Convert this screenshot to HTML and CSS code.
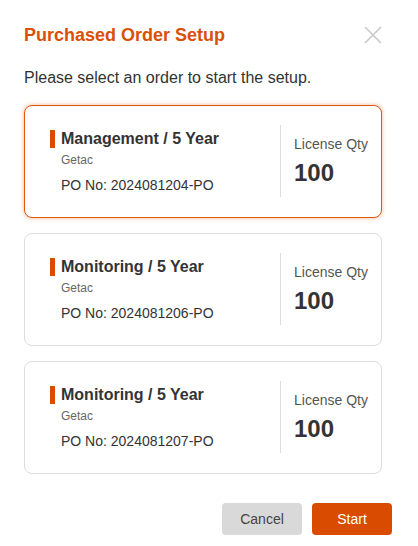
FILE: index.html
```html
<!DOCTYPE html>
<html>
<head>
<meta charset="utf-8">
<link rel="stylesheet" href="styles.css">
</head>
<body>
<div class="dialog">
  <div class="header">
    <h1 class="title">Purchased Order Setup</h1>
    <button class="close" aria-label="Close">
      <svg width="18" height="18" viewBox="0 0 18 18"><path d="M1 1L17 17M17 1L1 17" stroke="#c8c8c8" stroke-width="1.6" fill="none"/></svg>
    </button>
  </div>
  <p class="subtitle">Please select an order to start the setup.</p>
  <div class="orders">
    <div class="card selected">
      <div class="info">
        <div class="name"><span class="bar"></span>Management / 5 Year</div>
        <div class="vendor">Getac</div>
        <div class="po">PO No: 2024081204-PO</div>
      </div>
      <div class="qty">
        <div class="qty-label">License Qty</div>
        <div class="qty-value">100</div>
      </div>
    </div>
    <div class="card">
      <div class="info">
        <div class="name"><span class="bar"></span>Monitoring / 5 Year</div>
        <div class="vendor">Getac</div>
        <div class="po">PO No: 2024081206-PO</div>
      </div>
      <div class="qty">
        <div class="qty-label">License Qty</div>
        <div class="qty-value">100</div>
      </div>
    </div>
    <div class="card">
      <div class="info">
        <div class="name"><span class="bar"></span>Monitoring / 5 Year</div>
        <div class="vendor">Getac</div>
        <div class="po">PO No: 2024081207-PO</div>
      </div>
      <div class="qty">
        <div class="qty-label">License Qty</div>
        <div class="qty-value">100</div>
      </div>
    </div>
  </div>
  <div class="footer">
    <button class="btn cancel">Cancel</button>
    <button class="btn start">Start</button>
  </div>
</div>
</body>
</html>
```

FILE: styles.css
```css
html, body {
  margin: 0;
  padding: 0;
  background: #fff;
}
body {
  font-family: "Liberation Sans", Arial, sans-serif;
  color: #333;
}
.dialog {
  width: 418px;
  box-sizing: border-box;
  padding: 23px 26px 0 24px;
}
.header {
  display: flex;
  justify-content: space-between;
  align-items: flex-start;
  padding-right: 10px;
}
.title {
  margin: 0;
  font-size: 18px;
  line-height: 24px;
  font-weight: bold;
  color: #d9500b;
}
.close {
  border: 0;
  background: none;
  padding: 0;
  margin-top: 3px;
  width: 18px;
  height: 18px;
  cursor: pointer;
}
.close svg { display: block; }
.subtitle {
  margin: 21px 0 0;
  font-size: 16px;
  line-height: 20px;
  color: #333;
}
.orders {
  margin-top: 17px;
  display: flex;
  flex-direction: column;
  gap: 15px;
  margin-right: 10px;
}
.card {
  display: flex;
  min-height: 72px;
  border: 1px solid #dcdcdc;
  border-radius: 8px;
  padding: 19px 0 20px 25px;
  background: #fff;
}
.card.selected {
  border-color: #e0580f;
  box-shadow: 0 0 4px rgba(224, 88, 15, 0.45);
}
.info {
  flex: 1;
  padding-top: 5px;
}
.name {
  display: flex;
  align-items: center;
  font-size: 16px;
  line-height: 18px;
  font-weight: bold;
  color: #333;
}
.bar {
  width: 5px;
  height: 18px;
  background: #d94c00;
  margin-right: 6px;
}
.vendor {
  margin-top: 4px;
  padding-left: 11px;
  font-size: 12px;
  line-height: 16px;
  color: #666;
}
.po {
  margin-top: 8px;
  padding-left: 11px;
  font-size: 14px;
  line-height: 18px;
  color: #333;
}
.qty {
  width: 101px;
  box-sizing: border-box;
  border-left: 1px solid #dcdcdc;
  padding-left: 13px;
  display: flex;
  flex-direction: column;
  justify-content: center;
  gap: 6px;
}
.qty-label {
  font-size: 14px;
  line-height: 18px;
  color: #555;
}
.qty-value {
  font-size: 24px;
  line-height: 28px;
  font-weight: bold;
  color: #333;
}
.footer {
  display: flex;
  justify-content: flex-end;
  gap: 10px;
  margin-top: 29px;
}
.btn {
  width: 80px;
  height: 32px;
  border: 0;
  border-radius: 4px;
  font-family: "Liberation Sans", Arial, sans-serif;
  font-size: 14px;
  cursor: pointer;
}
.cancel {
  background: #d9d9d9;
  color: #444;
}
.start {
  background: #d94c00;
  color: #fff;
}
```
